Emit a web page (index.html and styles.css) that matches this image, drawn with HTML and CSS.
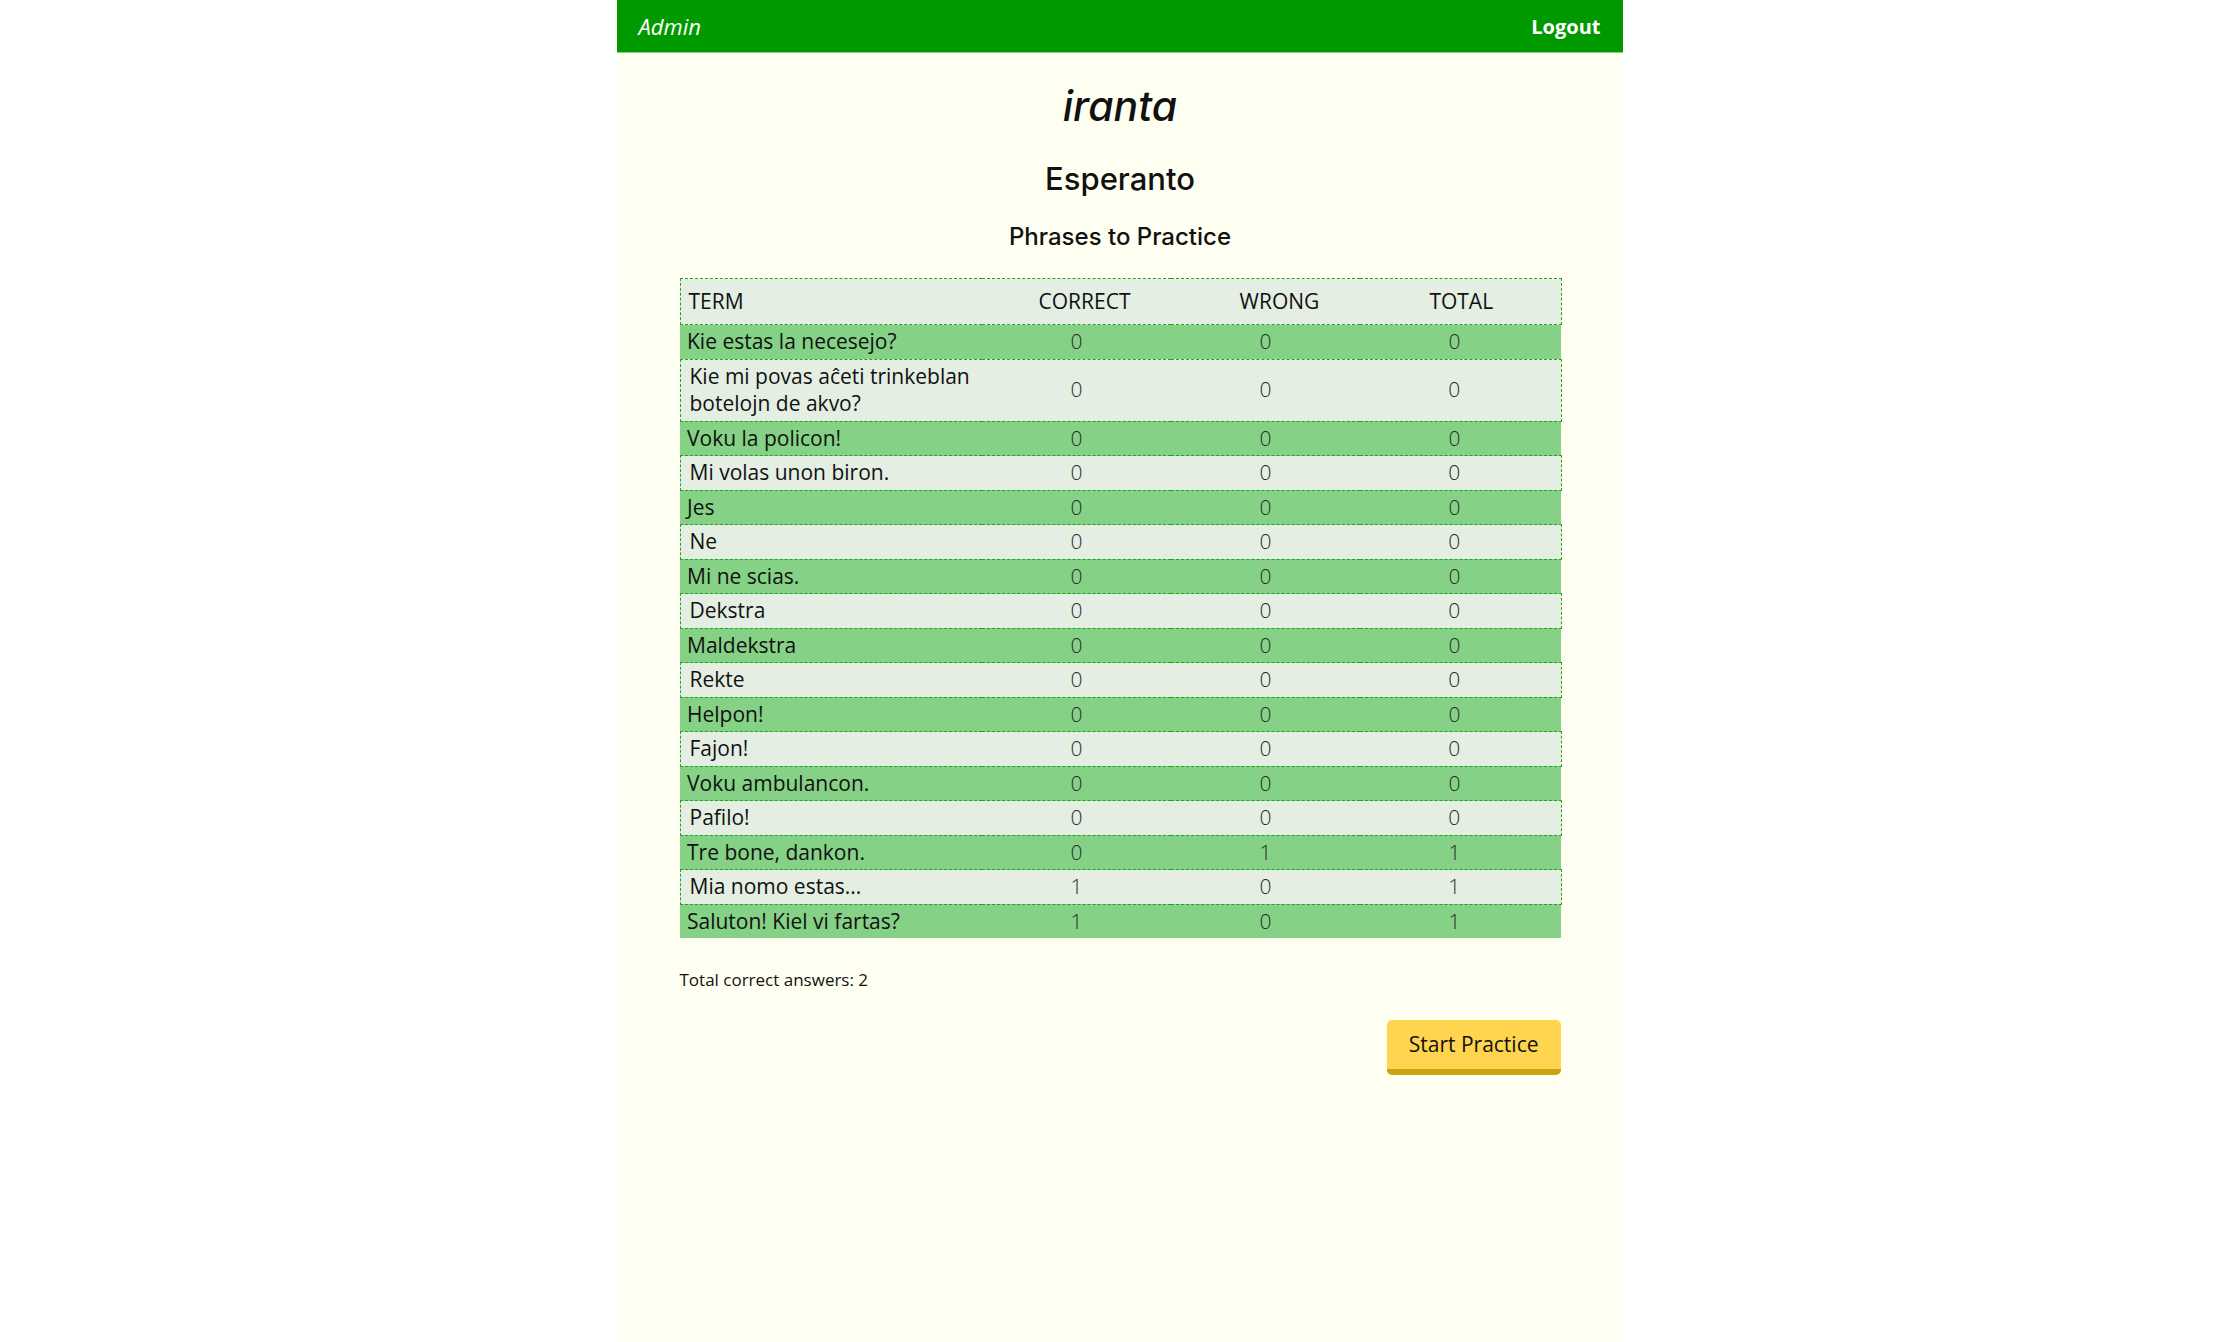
FILE: index.html
```html
<!DOCTYPE html>
<html lang="eo">
<head>
<meta charset="utf-8">
<title>iranta</title>
<link rel="stylesheet" href="styles.css">
</head>
<body>
<div class="page">
  <nav class="topbar">
    <span class="admin">Admin</span>
    <span class="logout">Logout</span>
  </nav>
  <main class="content">
    <h1 class="brand">iranta</h1>
    <h2 class="lang">Esperanto</h2>
    <h3 class="subtitle">Phrases to Practice</h3>
    <table class="phrases">
      <colgroup>
        <col class="col-term">
        <col class="col-num">
        <col class="col-num">
        <col class="col-last">
      </colgroup>
      <thead>
        <tr class="light head">
          <th class="th-term">TERM</th>
          <th class="th-correct">CORRECT</th>
          <th class="th-wrong">WRONG</th>
          <th class="th-total">TOTAL</th>
        </tr>
      </thead>
      <tbody>
        <tr class="green"><td class="term">Kie estas la necesejo?</td><td>0</td><td>0</td><td class="last">0</td></tr>
        <tr class="light"><td class="term">Kie mi povas aĉeti trinkeblan botelojn de akvo?</td><td>0</td><td>0</td><td class="last">0</td></tr>
        <tr class="green"><td class="term">Voku la policon!</td><td>0</td><td>0</td><td class="last">0</td></tr>
        <tr class="light"><td class="term">Mi volas unon biron.</td><td>0</td><td>0</td><td class="last">0</td></tr>
        <tr class="green"><td class="term">Jes</td><td>0</td><td>0</td><td class="last">0</td></tr>
        <tr class="light"><td class="term">Ne</td><td>0</td><td>0</td><td class="last">0</td></tr>
        <tr class="green"><td class="term">Mi ne scias.</td><td>0</td><td>0</td><td class="last">0</td></tr>
        <tr class="light"><td class="term">Dekstra</td><td>0</td><td>0</td><td class="last">0</td></tr>
        <tr class="green"><td class="term">Maldekstra</td><td>0</td><td>0</td><td class="last">0</td></tr>
        <tr class="light"><td class="term">Rekte</td><td>0</td><td>0</td><td class="last">0</td></tr>
        <tr class="green"><td class="term">Helpon!</td><td>0</td><td>0</td><td class="last">0</td></tr>
        <tr class="light"><td class="term">Fajon!</td><td>0</td><td>0</td><td class="last">0</td></tr>
        <tr class="green"><td class="term">Voku ambulancon.</td><td>0</td><td>0</td><td class="last">0</td></tr>
        <tr class="light"><td class="term">Pafilo!</td><td>0</td><td>0</td><td class="last">0</td></tr>
        <tr class="green"><td class="term">Tre bone, dankon.</td><td>0</td><td>1</td><td class="last">1</td></tr>
        <tr class="light"><td class="term">Mia nomo estas...</td><td>1</td><td>0</td><td class="last">1</td></tr>
        <tr class="green"><td class="term">Saluton! Kiel vi fartas?</td><td>1</td><td>0</td><td class="last">1</td></tr>
      </tbody>
    </table>
    <p class="summary">Total correct answers: 2</p>
    <div class="actions">
      <button class="start" type="button">Start Practice</button>
    </div>
  </main>
</div>
</body>
</html>
```

FILE: styles.css
```css
html, body {
  margin: 0;
  padding: 0;
  background: #ffffff;
}

body {
  font-family: "Open Sans", "Noto Sans", sans-serif;
  color: #111;
}

.page {
  width: 1006px;
  margin: 0 auto;
  min-height: 100vh;
  background: #fffff1;
  display: flex;
  flex-direction: column;
}

.topbar {
  height: 52px;
  background: #009a00;
  border-bottom: 1px solid #86d486;
  display: flex;
  align-items: center;
  justify-content: space-between;
  padding: 0 22px;
  color: #fff;
  font-size: 20px;
}

.admin {
  font-style: italic;
  font-size: 22px;
}

.logout {
  font-weight: 700;
}

.content {
  display: flex;
  flex-direction: column;
  padding: 0 62px 0 63px;
}

.brand,
.lang,
.subtitle {
  font-family: "Inter", "Noto Sans", sans-serif;
  text-align: center;
  margin: 0;
  color: #111;
}

.brand {
  font-style: italic;
  font-weight: 500;
  font-size: 41px;
  margin-top: 28px;
}

.lang {
  font-weight: 500;
  font-size: 31px;
  margin-top: 29px;
}

.subtitle {
  font-weight: 500;
  font-size: 24px;
  margin-top: 25px;
}

.phrases {
  margin-top: 27px;
  width: 100%;
  table-layout: fixed;
  border-collapse: collapse;
  font-size: 21px;
  line-height: 27.5px;
}

.col-term { width: 302px; }
.col-num { width: 189px; }
.col-last { width: 201px; }

.phrases th {
  font-weight: 400;
  padding: 9px 0 8.5px;
  text-align: center;
}

.phrases th.th-term {
  text-align: left;
  padding-left: 8px;
}

.phrases th.th-correct { padding-left: 16px; }
.phrases th.th-wrong { padding-left: 28px; }
.phrases th.th-total { padding-left: 2px; }

.phrases td {
  padding: 3px 0;
  text-align: center;
  color: #2c2c2c;
  font-weight: 300;
}

.phrases td.term {
  text-align: left;
  color: #111;
  font-weight: 400;
  padding-left: 7px;
}

.phrases td.last {
  padding-right: 12px;
}

.phrases tr.light {
  background: #e4eee3;
  border: 1px dashed #1ea61e;
}

.phrases tr.light td.term {
  padding-left: 9px;
}

.phrases tr.green {
  background: #85d185;
}

.summary {
  margin: 31px 0 0;
  font-size: 17px;
  line-height: 22px;
}

.actions {
  display: flex;
  justify-content: flex-end;
  margin-top: 29px;
}

.start {
  font-family: "Open Sans", "Noto Sans", sans-serif;
  font-size: 21px;
  line-height: 27px;
  color: #111;
  background: #ffd44e;
  border: none;
  border-bottom: 6px solid #c9a413;
  border-radius: 5px;
  padding: 11px 22px 11px;
  cursor: pointer;
}
```
